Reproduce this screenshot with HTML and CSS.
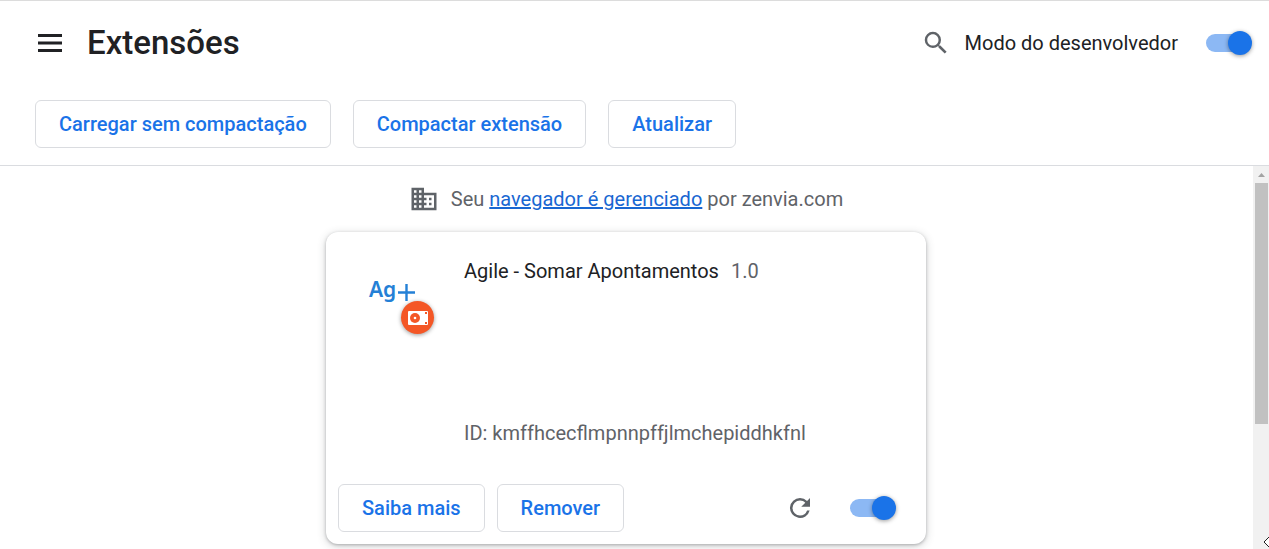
FILE: index.html
```html
<!DOCTYPE html>
<html lang="pt-BR">
<head>
<meta charset="utf-8">
<title>Extensões</title>
<link rel="stylesheet" href="styles.css">
</head>
<body>
<header class="header">
  <div class="topbar">
    <button class="icon-button menu-button" type="button" aria-label="Menu principal">
      <svg width="24" height="18" viewBox="0 0 24 18" fill="#202124"><path d="M0 0h24v3H0zM0 7.5h24v3H0zM0 15h24v3H0z"/></svg>
    </button>
    <h1 class="title">Extensões</h1>
    <button class="icon-button search-button" type="button" aria-label="Pesquisar">
      <svg width="30" height="30" viewBox="0 0 24 24" fill="#5f6368"><path d="M15.5 14h-.79l-.28-.27A6.471 6.471 0 0 0 16 9.500 6.500 6.500 0 1 0 9.500 16c1.610 0 3.090-.590 4.230-1.570l.27.28v.79l5 4.990L20.490 19l-4.990-5zm-6 0C7.010 14 5 11.990 5 9.500S7.010 5 9.500 5 14 7.010 14 9.500 11.990 14 9.500 14z"/></svg>
    </button>
    <label class="dev-label" for="dev-mode">Modo do desenvolvedor</label>
    <input class="toggle" type="checkbox" id="dev-mode" checked>
  </div>
  <div class="toolbar">
    <button class="button" type="button">Carregar sem compactação</button>
    <button class="button" type="button">Compactar extensão</button>
    <button class="button" type="button">Atualizar</button>
  </div>
</header>
<div class="body">
  <main class="content">
    <p class="notice">
      <svg width="30" height="30" viewBox="0 0 24 24" fill="#5f6368" aria-hidden="true"><path d="M12 7V3H2v18h20V7H12zM6 19H4v-2h2v2zm0-4H4v-2h2v2zm0-4H4V9h2v2zm0-4H4V5h2v2zm4 12H8v-2h2v2zm0-4H8v-2h2v2zm0-4H8V9h2v2zm0-4H8V5h2v2zm10 12h-8v-2h2v-2h-2v-2h2v-2h-2V9h8v10zm-2-8h-2v2h2v-2zm0 4h-2v2h2v-2z"/></svg>
      <span>Seu <a class="link" href="#">navegador é gerenciado</a> por zenvia.com</span>
    </p>
    <article class="card">
      <div class="card-main">
        <div class="app-icon">
          <svg width="54" height="54" viewBox="0 0 54 54" role="img" aria-label="Ag+">
            <text class="app-letters" x="7" y="31">Ag</text>
            <path d="M44.500 18v17M36 26.500h17" stroke="#2480d6" stroke-width="2.400" fill="none"/>
          </svg>
          <span class="badge">
            <svg width="20" height="14" viewBox="0 0 20 14" aria-hidden="true"><rect width="20" height="14" rx="1" fill="#fff"/><circle cx="7" cy="7" r="5" fill="#f45726"/><circle cx="7" cy="7" r="1.300" fill="#fff"/><path d="M17 1h2v2h-2zM17 11h2v2h-2z" fill="#f45726"/></svg>
          </span>
        </div>
        <div class="details">
          <div class="name-row"><h2 class="name">Agile - Somar Apontamentos</h2><span>1.0</span></div>
          <div>ID: kmffhcecflmpnnpffjlmchepiddhkfnl</div>
        </div>
      </div>
      <div class="actions">
        <button class="button" type="button">Saiba mais</button>
        <button class="button" type="button">Remover</button>
        <button class="icon-button reload-button" type="button" aria-label="Atualizar extensão">
          <svg width="30" height="30" viewBox="0 0 24 24" fill="#5f6368"><path d="M17.650 6.350A7.958 7.958 0 0 0 12 4a8 8 0 1 0 7.730 10h-2.080A5.990 5.990 0 0 1 12 18a6 6 0 1 1 0-12c1.660 0 3.140.690 4.220 1.780L13 11h7V4l-2.350 2.350z"/></svg>
        </button>
        <input class="toggle" type="checkbox" aria-label="Ativar extensão" checked>
      </div>
    </article>
  </main>
  <div class="scrollbar" aria-hidden="true">
    <svg width="16" height="16" viewBox="0 0 16 16"><path d="M5 11l3.500-4 3.500 4z" fill="#a3a3a3"/></svg>
    <div class="thumb"></div>
  </div>
</div>
<svg class="pointer" width="6" height="12" viewBox="0 0 6 12" aria-hidden="true"><path d="M6 1L1 6l5 5" fill="#fff" stroke="#222" stroke-width="1"/></svg>
</body>
</html>
```
FILE: styles.css
```css
* {
  box-sizing: border-box;
}

body {
  margin: 0;
  height: 100vh;
  display: flex;
  flex-direction: column;
  overflow: hidden;
  background: #fff;
  color: #202124;
  font: 20px/30px Roboto, "Liberation Sans", sans-serif;
}

.header {
  flex: none;
  border-top: 1px solid #dcdcdc;
  border-bottom: 1px solid #dadce0;
}

.topbar {
  height: 84px;
  padding: 0 17px 0 38px;
  display: flex;
  align-items: center;
}

.icon-button {
  display: flex;
  padding: 0;
  border: 0;
  background: none;
}

.title {
  margin: 0 auto 0 25px;
  font-size: 33px;
  line-height: 42px;
  font-weight: 500;
}

.dev-label {
  margin: 0 28px 0 14px;
}

.toggle {
  appearance: none;
  position: relative;
  flex: none;
  display: flex;
  justify-content: flex-end;
  width: 46px;
  height: 24px;
  margin: 0;
}

.toggle::before {
  content: "";
  position: absolute;
  inset: 3px 3px 3px 0;
  border-radius: 9px;
  background: #8cb8f4;
}

.toggle::after {
  content: "";
  position: relative;
  width: 24px;
  height: 24px;
  border-radius: 50%;
  background: #1a73e8;
  box-shadow: 0 1px 4px rgba(0, 0, 0, 0.4);
}

.toolbar {
  display: flex;
  gap: 22px;
  padding: 15px 35px 17px;
}

.button {
  height: 48px;
  padding: 0 23px;
  border: 1px solid #dadce0;
  border-radius: 6px;
  background: #fff;
  color: #1a73e8;
  font: inherit;
  font-weight: 500;
  white-space: nowrap;
}

.body {
  flex: 1;
  min-height: 0;
  display: flex;
}

.content {
  flex: 1;
  display: flex;
  flex-direction: column;
  align-items: center;
  padding-right: 1px;
  overflow: hidden;
}

.notice {
  margin: 18px 0;
  display: flex;
  align-items: center;
  gap: 12px;
  color: #5f6368;
}

.link {
  color: #1967d2;
}

.card {
  flex: none;
  width: 600px;
  max-width: 100%;
  padding: 24px 12px 12px;
  border-radius: 12px;
  background: #fff;
  box-shadow: 0 1px 3px rgba(60, 64, 67, 0.3), 0 2px 9px rgba(60, 64, 67, 0.25);
}

.card-main {
  display: flex;
  gap: 48px;
  padding-left: 24px;
  height: 228px;
}

.app-icon {
  position: relative;
  width: 54px;
  height: 54px;
  margin-top: 10px;
}

.app-letters {
  font: 600 21px "Noto Sans", sans-serif;
  fill: #2480d6;
}

.badge {
  position: absolute;
  left: 39px;
  top: 35px;
  width: 33px;
  height: 33px;
  display: flex;
  align-items: center;
  justify-content: center;
  border-radius: 50%;
  background: #f45726;
  box-shadow: 0 1px 4px rgba(0, 0, 0, 0.4);
}

.details {
  display: flex;
  flex-direction: column;
  justify-content: space-between;
  padding-bottom: 36px;
  color: #5f6368;
}

.name-row {
  display: flex;
  gap: 12px;
}

.name {
  margin: 0;
  font-size: 20px;
  line-height: 30px;
  font-weight: 400;
  color: #202124;
}

.actions {
  display: flex;
  align-items: center;
  gap: 12px;
  padding-right: 18px;
}

.reload-button {
  margin: 0 23px 0 auto;
}

.scrollbar {
  flex: none;
  width: 16px;
  display: flex;
  flex-direction: column;
  background: #f1f1f1;
}

.thumb {
  height: 63%;
  margin: 1px 1px 0 2px;
  background: #c1c1c1;
}

.pointer {
  position: absolute;
  right: 0;
  bottom: 1px;
}
```
